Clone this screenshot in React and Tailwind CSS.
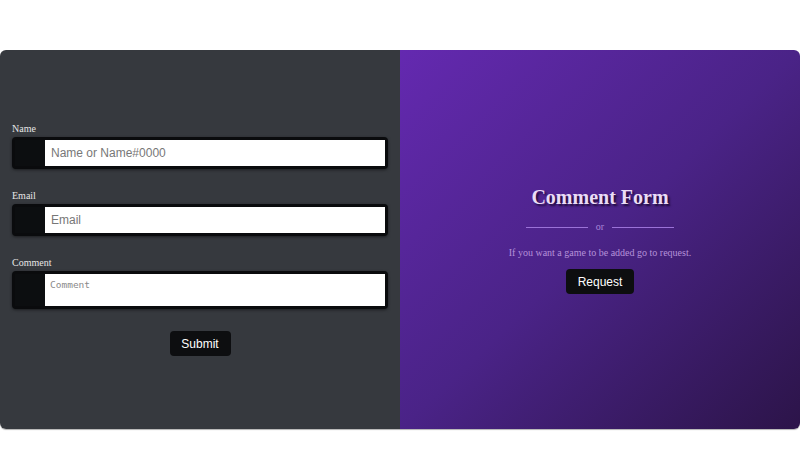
import React from 'react';

const Field = ({ label, placeholder, area, last }) => (
  <div className={last ? '' : 'mb-[21px]'}>
    <label className="block text-[10px] leading-[12px] text-[#e6e6e6] mb-[2px] font-['Liberation_Serif',serif]">{label}</label>
    <div className={`flex border-[3px] border-[#0a0b0d] rounded-[4px] bg-[#0c0e10] shadow-[0_1px_3px_rgba(0,0,0,0.5)] ${area ? 'h-[38px]' : 'h-[32px]'}`}>
      <div className="w-[30px] bg-[#0c0e10]"></div>
      {area ? (
        <textarea
          placeholder={placeholder}
          className="flex-1 bg-white px-[5px] pt-[4px] text-[9.5px] font-['DejaVu_Sans_Mono',monospace] resize-none outline-none placeholder:text-[#8a8a8a]"
        />
      ) : (
        <input
          placeholder={placeholder}
          className="flex-1 bg-white px-[6px] text-[12px] font-['Liberation_Sans',sans-serif] outline-none placeholder:text-[#777]"
        />
      )}
    </div>
  </div>
);

export default function App() {
  return (
    <div className="w-[800px] h-[450px] bg-white pt-[50px]">
      <div className="flex h-[379px] rounded-[6px] overflow-hidden shadow-[0_1px_1px_rgba(0,0,0,0.3)]">
        <div className="w-1/2 bg-[#36393e] flex flex-col justify-center px-3">
          <Field label="Name" placeholder="Name or Name#0000" />
          <Field label="Email" placeholder="Email" />
          <Field label="Comment" placeholder="Comment" area last />
          <div className="flex justify-center mt-[22px]">
            <button className="w-[61px] h-[25px] bg-[#0d0e10] rounded-[4px] text-white text-[12px] font-['Liberation_Sans',sans-serif]">Submit</button>
          </div>
        </div>
        <div className="w-1/2 bg-gradient-to-br from-[#6429b0] via-[#4a2387] to-[#2c1449] flex flex-col items-center justify-center">
          <h1 className="text-[20px] leading-[24px] font-bold text-[#eadcf6] font-['Liberation_Serif',serif] [text-shadow:2px_2px_2px_rgba(20,5,40,0.8)]">Comment Form</h1>
          <div className="flex items-center gap-[8px] mt-[11px]">
            <div className="w-[62px] h-[1px] bg-[#9b72d8]"></div>
            <span className="text-[10px] text-[#a886d8] font-['Liberation_Serif',serif] leading-[14px]">or</span>
            <div className="w-[62px] h-[1px] bg-[#9b72d8]"></div>
          </div>
          <p className="mt-[12px] text-[10px] text-[#b592d9] font-['Liberation_Serif',serif] leading-[14px]">If you want a game to be added go to request.</p>
          <button className="mt-[9px] w-[68px] h-[25px] bg-[#0d0e10] rounded-[4px] text-white text-[12px] font-['Liberation_Sans',sans-serif]">Request</button>
        </div>
      </div>
    </div>
  );
}
